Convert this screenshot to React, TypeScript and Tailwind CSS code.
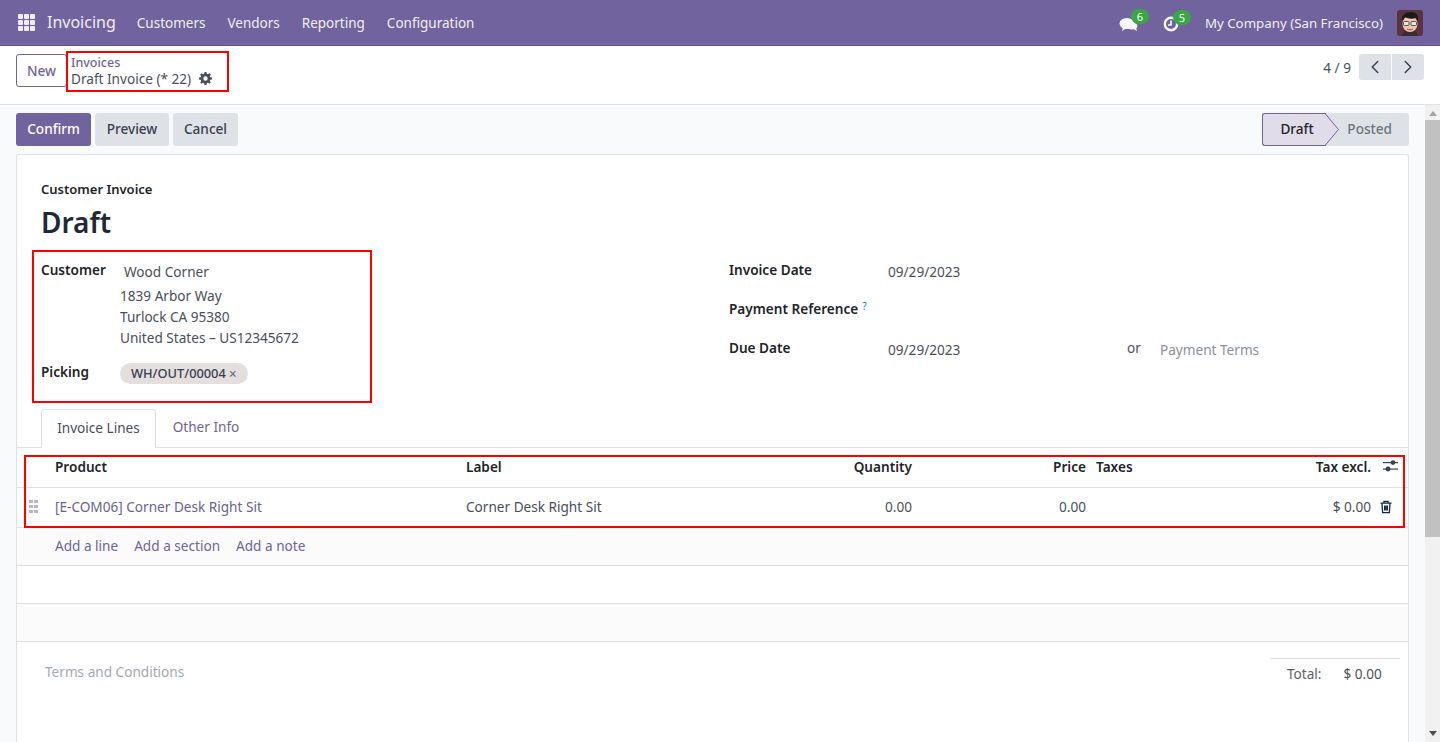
import { ChevronLeft, ChevronRight } from 'lucide-react';

const NAV_ITEMS = ['Customers', 'Vendors', 'Reporting', 'Configuration'];

function GridIcon() {
  return (
    <div className="grid grid-cols-3 gap-[1px] w-[17px] h-[17px]">
      {Array.from({ length: 9 }).map((_, i) => (
        <div key={i} className="bg-[#f0eef4] rounded-[1px]" />
      ))}
    </div>
  );
}

function Avatar() {
  return (
    <svg width="26" height="26" viewBox="0 0 26 26" className="rounded-[3px]">
      <rect width="26" height="26" fill="#5b3340" />
      <path d="M5 26c1-5 4-6 8-6s7 1 8 6z" fill="#3a2a33" />
      <ellipse cx="13" cy="14" rx="7.5" ry="8" fill="#f3c6ae" />
      <path d="M5 11c-1-6 4-9 9-9s8 3 7 9l-2-3c-3 1-8 1-11-1z" fill="#1d1a1c" />
      <rect x="6.5" y="11.5" width="5.5" height="4" rx="1" fill="#e9e7e2" stroke="#333" strokeWidth="0.8" />
      <rect x="14" y="11.5" width="5.5" height="4" rx="1" fill="#e9e7e2" stroke="#333" strokeWidth="0.8" />
      <path d="M10 19c2 1.2 4 1.2 6 0" stroke="#8b4a3c" strokeWidth="1" fill="none" />
    </svg>
  );
}

function Field({ label, value }: { label: string; value?: string }) {
  return (
    <div className="flex h-[39px]">
      <div className="w-[159px] pt-[1px] font-semibold text-[#212529]">{label}</div>
      <div className="pt-[3px] text-[#495057]">{value}</div>
    </div>
  );
}

export default function App() {
  return (
    <div className="relative h-[742px] overflow-hidden bg-white font-['Noto_Sans',sans-serif] text-[13.6px] leading-[21px] text-[#495057]">
      {/* Top bar */}
      <header className="flex h-[46px] items-center border-b border-[#5f5284] bg-[#71639e] pl-[18px] pr-[17px] text-[13.3px] text-[#f0eef4]">
        <GridIcon />
        <span className="ml-[12px] text-[16px]">Invoicing</span>
        <nav className="ml-[21px] flex gap-[22px] pt-[1px] text-[13.5px]">
          {NAV_ITEMS.map((item) => (
            <span key={item}>{item}</span>
          ))}
        </nav>
        <div className="ml-auto flex items-center">
          <div className="relative mr-[24px] mt-[2px] h-[16px] w-[20px]">
            <svg width="20" height="17" viewBox="0 0 20 17">
              <ellipse cx="8" cy="7.5" rx="7.5" ry="5.5" fill="#f6f5f9" />
              <ellipse cx="13" cy="10" rx="5.5" ry="3.5" fill="#f6f5f9" />
              <path d="M4 11l-1 4 5-3zM13 12l5 3-1-4z" fill="#f6f5f9" />
            </svg>
            <span className="absolute left-[12px] top-[-7px] flex h-[15px] w-[18px] items-center justify-center rounded-full bg-[#3aa745] text-[11px] leading-none text-white">6</span>
          </div>
          <div className="relative mr-[26px] mt-[2px] h-[16px] w-[16px]">
            <svg width="16" height="16" viewBox="0 0 16 16" fill="none">
              <circle cx="8" cy="8" r="6.2" stroke="#f6f5f9" strokeWidth="2.4" />
              <path d="M8 4.5V9H5" stroke="#f6f5f9" strokeWidth="1.6" />
            </svg>
            <span className="absolute left-[10px] top-[-6px] flex h-[15px] w-[18px] items-center justify-center rounded-full bg-[#3aa745] text-[11px] leading-none text-white">5</span>
          </div>
          <span className="mr-[14px] pt-[1px]">My Company (San Francisco)</span>
          <Avatar />
        </div>
      </header>

      {/* Control panel */}
      <div className="flex h-[59px] items-start border-b border-[#dee2e6] pl-[16px] pr-[16px] pt-[8px]">
        <button className="h-[33px] w-[51px] rounded-[3px] border border-[#71639e] pb-[1px] font-medium text-[#71639e]">New</button>
        <div className="ml-[4px]">
          <div className="text-[12.5px] leading-[17px] font-medium text-[#71639e]">Invoices</div>
          <div className="flex items-center leading-[15px] text-[#495057]">
            Draft Invoice (* 22)
            <svg width="13" height="13" viewBox="0 0 16 16" className="ml-[8px]" fill="#495057">
              <path d="M6.8 0h2.4l.4 2.2 1.4.6 1.9-1.3 1.7 1.7-1.3 1.9.6 1.4 2.1.3v2.4l-2.1.4-.6 1.4 1.3 1.9-1.7 1.7-1.9-1.3-1.4.6-.4 2.1H6.8l-.4-2.1-1.4-.6-1.9 1.3-1.7-1.7 1.3-1.9-.6-1.4L0 9.2V6.8l2.1-.3.6-1.4-1.3-1.9 1.7-1.7 1.9 1.3 1.4-.6zM8 5.3a2.7 2.7 0 100 5.4 2.7 2.7 0 000-5.4z" fillRule="evenodd" />
            </svg>
          </div>
        </div>
        <div className="ml-auto flex items-center">
          <span className="mr-[8px] mt-[1px] pb-[1px] text-[#495057]">4 / 9</span>
          <div className="flex gap-[1px]">
            <button className="flex h-[26px] w-[32px] items-center justify-center rounded-l-[3px] bg-[#dee2e6] text-[#374151]"><ChevronLeft size={22} strokeWidth={1.6} /></button>
            <button className="flex h-[26px] w-[32px] items-center justify-center rounded-r-[3px] bg-[#dee2e6] text-[#374151]"><ChevronRight size={22} strokeWidth={1.6} /></button>
          </div>
        </div>
      </div>

      <div className="flex h-[637px]">
        <main className="min-w-0 flex-1 bg-[#f9fafb] pl-[16px] pr-[16px]">
          {/* Status bar */}
          <div className="flex h-[49px] items-start pt-[8px]">
            <div className="flex gap-[4px] font-medium">
              <button className="h-[33px] w-[75px] rounded-[3px] bg-[#71639e] pb-[3px] text-white">Confirm</button>
              <button className="h-[33px] w-[74px] rounded-[3px] bg-[#dee2e6] pb-[3px] text-[#374151]">Preview</button>
              <button className="h-[33px] w-[65px] rounded-[3px] bg-[#dee2e6] pb-[3px] text-[#374151]">Cancel</button>
            </div>
            <div className="ml-auto flex h-[33px] w-[147px] rounded-[3px] bg-[#dee2e6] font-medium">
              <div className="relative flex w-[64px] items-center justify-center rounded-l-[3px] border border-r-0 border-[#71639e] bg-[#e0dce9] pb-[3px] pl-[5px] text-[#212529]">
                Draft
                <svg width="14" height="33" viewBox="0 0 14 33" className="absolute left-[62px] top-[-1px]">
                  <path d="M0 0.5L13.5 16.5L0 32.5" fill="#e0dce9" stroke="#71639e" />
                </svg>
              </div>
              <div className="flex flex-1 items-center justify-end pb-[3px] pr-[17px] text-[#6c757d]">Posted</div>
            </div>
          </div>

          {/* Sheet */}
          <div className="h-[600px] rounded-t-[3px] border border-b-0 border-[#dee2e6] bg-white">
            <div className="px-[24px] pt-[24px]">
              <div className="text-[13px] font-semibold leading-[20px] text-[#212529]">Customer Invoice</div>
              <div className="mt-[4px] text-[28px] leading-[38px] font-semibold text-[#1f2937]">Draft</div>
              <div className="mt-[17px] grid grid-cols-[688px_1fr]">
                <div>
                  <div className="flex">
                    <div className="w-[79px] pt-[1px] font-semibold text-[#212529]">Customer</div>
                    <div className="pt-[3px]">
                      <div className="pl-[4px] leading-[21px]">Wood Corner</div>
                      <div className="mt-[3px]">1839 Arbor Way</div>
                      <div>Turlock CA 95380</div>
                      <div>United States – US12345672</div>
                    </div>
                  </div>
                  <div className="mt-[12px] flex">
                    <div className="w-[79px] pt-[1px] font-semibold text-[#212529]">Picking</div>
                    <div className="mt-[3px] flex h-[21px] items-center rounded-full bg-[#e4dedc] px-[11px] text-[12.8px] font-medium text-[#374151]">
                      WH/OUT/00004
                      <span className="ml-[3px] text-[14px] text-[#6b7280]">×</span>
                    </div>
                  </div>
                </div>
                <div>
                  <Field label="Invoice Date" value="09/29/2023" />
                  <div className="flex h-[39px] font-semibold text-[#212529]">
                    <span className="pt-[1px]">Payment Reference</span>
                    <sup className="ml-[4px] mt-[14px] text-[10px] font-normal text-[#0a8bb5]">?</sup>
                  </div>
                  <div className="flex">
                    <div className="w-[159px] pt-[1px] font-semibold text-[#212529]">Due Date</div>
                    <div className="w-[239px] pt-[3px]">09/29/2023</div>
                    <div className="w-[33px] pt-[1px]">or</div>
                    <div className="pt-[3px] text-[#8a929a]">Payment Terms</div>
                  </div>
                </div>
              </div>
            </div>

            {/* Tabs */}
            <div className="mt-[25px] flex h-[39px] border-b border-[#dee2e6] pl-[24px]">
              <div className="flex h-[39px] w-[115px] items-center justify-center rounded-t-[3px] border border-b-0 border-[#dee2e6] bg-white pb-[3px]">Invoice Lines</div>
              <div className="flex w-[100px] items-center justify-center pb-[3px] text-[#71639e]">Other Info</div>
            </div>

            {/* Lines */}
            <div className="flex h-[40px] border-b border-[#dee2e6] pt-[8px] font-semibold text-[#212529]">
              <div className="w-[38px]" />
              <div className="w-[411px]">Product</div>
              <div className="w-[200px]">Label</div>
              <div className="w-[246px] text-right">Quantity</div>
              <div className="w-[174px] text-right">Price</div>
              <div className="w-[80px] pl-[10px]">Taxes</div>
              <div className="w-[205px] text-right">Tax excl.</div>
              <div className="ml-[12px] pt-[3px]">
                <svg width="15" height="14" viewBox="0 0 15 14" fill="#374151">
                  <rect y="3" width="15" height="1.2" />
                  <rect y="9.5" width="15" height="1.2" />
                  <circle cx="10" cy="3.6" r="2.4" />
                  <circle cx="5" cy="10" r="2.4" />
                </svg>
              </div>
            </div>
            <div className="flex h-[40px] items-center border-b border-[#dee2e6] pb-[2px] text-[#495057]">
              <div className="w-[38px] pl-[12px]">
                <div className="grid w-[9px] grid-cols-2 gap-x-[1px] gap-y-[2px]">
                  {Array.from({ length: 6 }).map((_, i) => (
                    <div key={i} className="h-[3px] w-[4px] bg-[#b5b9bd]" />
                  ))}
                </div>
              </div>
              <div className="w-[411px] text-[#6a6390]">[E-COM06] Corner Desk Right Sit</div>
              <div className="w-[200px]">Corner Desk Right Sit</div>
              <div className="w-[246px] text-right">0.00</div>
              <div className="w-[174px] text-right">0.00</div>
              <div className="w-[285px] text-right">$ 0.00</div>
              <div className="ml-[8px] flex">
                <svg width="14" height="14" viewBox="0 0 14 14" fill="none" stroke="#0b2a4a" strokeWidth="1.3">
                  <path d="M1.5 3.2h11M5 3V1.4h4V3M3 3.4l.6 9.2h6.8l.6-9.2M5.6 5.5v5M7 5.5v5M8.4 5.5v5" />
                </svg>
              </div>
            </div>
            <div className="flex h-[38px] items-center gap-[16px] border-b border-[#dee2e6] bg-[#fbfbfb] pb-[2px] pl-[38px] text-[#71639e]">
              <span>Add a line</span>
              <span>Add a section</span>
              <span>Add a note</span>
            </div>
            <div className="h-[38px] border-b border-[#dee2e6]" />
            <div className="h-[38px] border-b border-[#dee2e6] bg-[#fbfbfb]" />

            {/* Footer */}
            <div className="flex pt-[16px]">
              <div className="pl-[28px] pt-[3px] text-[#a3a9af]">Terms and Conditions</div>
              <div className="ml-auto mr-[8px] w-[130px] border-t border-[#dee2e6] pt-[4px]">
                <div className="flex pl-[17px]">
                  <span className="text-[#5d6268]">Total:</span>
                  <span className="ml-[22px]">$ 0.00</span>
                </div>
              </div>
            </div>
          </div>
        </main>

        {/* Scrollbar */}
        <div className="flex w-[15px] flex-col items-center bg-[#f1f1f1]">
          <div className="mt-[6px] h-0 w-0 border-x-[4px] border-b-[5px] border-x-transparent border-b-[#a3a3a3]" />
          <div className="mt-[4px] h-[417px] w-full bg-[#c1c1c1]" />
          <div className="mt-auto mb-[6px] h-0 w-0 border-x-[4px] border-t-[5px] border-x-transparent border-t-[#505050]" />
        </div>
      </div>

      {/* Red annotation boxes */}
      <div className="absolute left-[66px] top-[51px] h-[41px] w-[163px] border-2 border-[#ff0000]" />
      <div className="absolute left-[32px] top-[250px] h-[153px] w-[340px] border-2 border-[#ff0000]" />
      <div className="absolute left-[24px] top-[455px] h-[73px] w-[1381px] border-2 border-[#ff0000]" />
    </div>
  );
}
